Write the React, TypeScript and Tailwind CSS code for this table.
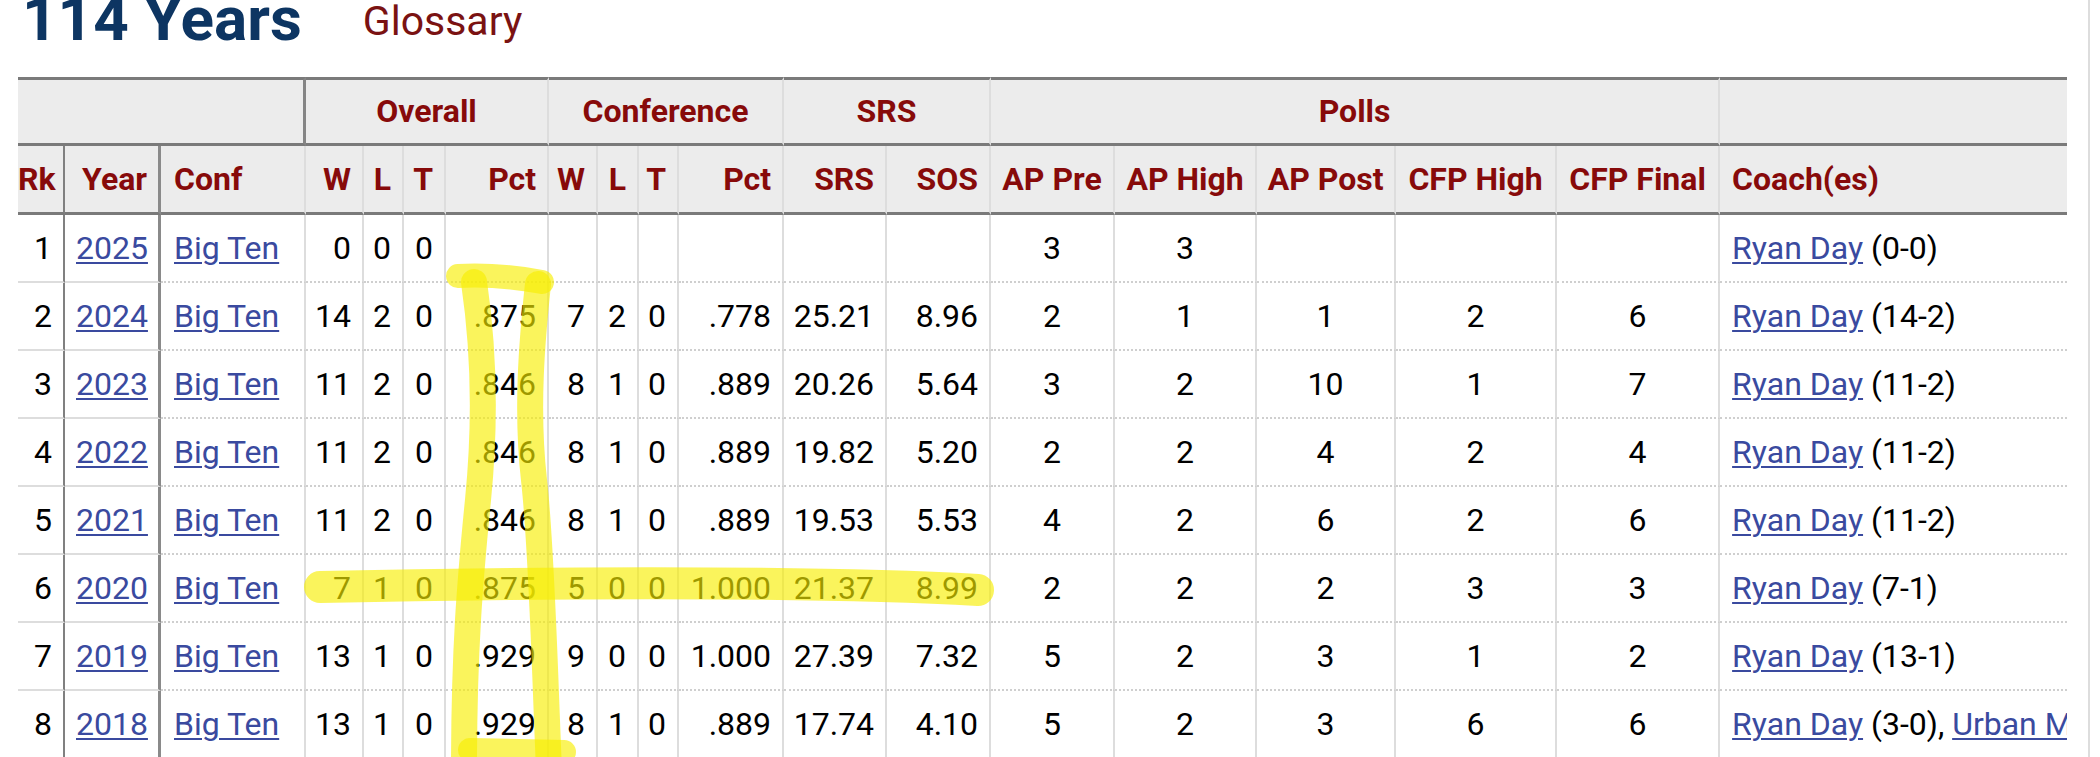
import React from "react";

const NUM = "text-right pl-[4px] pr-[11px] border-r-2 border-r-[#dddddd]";
const POLL = "text-center px-[4px] border-r-2 border-r-[#dddddd]";

const columns = [
  { label: "Rk", w: "w-[47px]", cls: "text-right pl-0 pr-[11px] border-r-2 border-r-[#808080]" },
  { label: "Year", w: "w-[96px]", cls: "text-right px-[11px] border-r-[3px] border-r-[#8a8a8a]" },
  { label: "Conf", w: "w-[145px]", cls: "text-left pl-[13px] pr-[4px] border-r-2 border-r-[#dddddd]" },
  { label: "W", w: "w-[58px]", cls: NUM },
  { label: "L", w: "w-[40px]", cls: NUM },
  { label: "T", w: "w-[42px]", cls: NUM },
  { label: "Pct", w: "w-[103px]", cls: NUM },
  { label: "W", w: "w-[49px]", cls: NUM },
  { label: "L", w: "w-[41px]", cls: NUM },
  { label: "T", w: "w-[40px]", cls: NUM },
  { label: "Pct", w: "w-[105px]", cls: NUM },
  { label: "SRS", w: "w-[103px]", cls: NUM },
  { label: "SOS", w: "w-[104px]", cls: NUM },
  { label: "AP Pre", w: "w-[124px]", cls: POLL },
  { label: "AP High", w: "w-[142px]", cls: POLL },
  { label: "AP Post", w: "w-[139px]", cls: POLL },
  { label: "CFP High", w: "w-[161px]", cls: POLL },
  { label: "CFP Final", w: "w-[163px]", cls: POLL },
  { label: "Coach(es)", w: "w-[347px]", cls: "text-left pl-[12px] pr-0 overflow-hidden whitespace-nowrap" },
];

type Coach = { name: string; rec: string };
type Season = { cells: string[]; coaches: Coach[] };

const seasons: Season[] = [
  { cells: ["1", "2025", "Big Ten", "0", "0", "0", "", "", "", "", "", "", "", "3", "3", "", "", ""], coaches: [{ name: "Ryan Day", rec: "(0-0)" }] },
  { cells: ["2", "2024", "Big Ten", "14", "2", "0", ".875", "7", "2", "0", ".778", "25.21", "8.96", "2", "1", "1", "2", "6"], coaches: [{ name: "Ryan Day", rec: "(14-2)" }] },
  { cells: ["3", "2023", "Big Ten", "11", "2", "0", ".846", "8", "1", "0", ".889", "20.26", "5.64", "3", "2", "10", "1", "7"], coaches: [{ name: "Ryan Day", rec: "(11-2)" }] },
  { cells: ["4", "2022", "Big Ten", "11", "2", "0", ".846", "8", "1", "0", ".889", "19.82", "5.20", "2", "2", "4", "2", "4"], coaches: [{ name: "Ryan Day", rec: "(11-2)" }] },
  { cells: ["5", "2021", "Big Ten", "11", "2", "0", ".846", "8", "1", "0", ".889", "19.53", "5.53", "4", "2", "6", "2", "6"], coaches: [{ name: "Ryan Day", rec: "(11-2)" }] },
  { cells: ["6", "2020", "Big Ten", "7", "1", "0", ".875", "5", "0", "0", "1.000", "21.37", "8.99", "2", "2", "2", "3", "3"], coaches: [{ name: "Ryan Day", rec: "(7-1)" }] },
  { cells: ["7", "2019", "Big Ten", "13", "1", "0", ".929", "9", "0", "0", "1.000", "27.39", "7.32", "5", "2", "3", "1", "2"], coaches: [{ name: "Ryan Day", rec: "(13-1)" }] },
  { cells: ["8", "2018", "Big Ten", "13", "1", "0", ".929", "8", "1", "0", ".889", "17.74", "4.10", "5", "2", "3", "6", "6"], coaches: [{ name: "Ryan Day", rec: "(3-0)" }, { name: "Urban Meyer", rec: "(10-1)" }] },
];

const LINK = "text-[#3a4a9f] underline decoration-2 underline-offset-[3px]";
const H1 = "h-[69px] bg-[#ececec] border-t-[3px] border-t-[#7a7a7a] border-b-[3px] border-b-[#7a7a7a] text-center p-0";

// hand-drawn highlighter marks over the table
function Highlighter() {
  const stroke = { fill: "none", stroke: "#f7ee00", strokeOpacity: 0.64, strokeLinecap: "round" as const, strokeLinejoin: "round" as const };
  return (
    <svg className="absolute inset-0 pointer-events-none z-10" width="2100" height="757" viewBox="0 0 2100 757">
      <path d="M458 276 Q500 274 542 282" strokeWidth="24" {...stroke} />
      <path d="M474 282 C484 350 486 420 478 500 S464 650 464 770" strokeWidth="26" {...stroke} />
      <path d="M538 284 C532 340 526 410 534 480 S545 680 549 770" strokeWidth="26" {...stroke} />
      <path d="M470 750 L564 752" strokeWidth="24" {...stroke} />
      <path d="M320 587 C500 583 800 580 978 590" strokeWidth="32" {...stroke} />
    </svg>
  );
}

export default function App() {
  return (
    <div className="relative w-[2100px] h-[757px] overflow-hidden bg-white font-[family-name:Roboto,sans-serif]">
      <div className="w-[2090px] h-full border-r-2 border-r-[#dddddd]">
        <div className="flex items-start h-[77px] pl-[22px]">
          <h1 className="mt-[-12px] text-[62px] leading-[62px] font-bold text-[#0d3562]">114 Years</h1>
          <span className="ml-[61px] mt-[1px] text-[41px] leading-[41px] text-[#7a1212]">Glossary</span>
        </div>

        <table className="ml-[18px] w-[2049px] table-fixed border-separate border-spacing-0 text-[32px] leading-[1.2]">
          <colgroup>
            {columns.map((c, i) => (
              <col key={i} className={c.w} />
            ))}
          </colgroup>
          <thead className="font-bold text-[#870a0a]">
            <tr>
              <th colSpan={3} className={`${H1} border-r-[3px] border-r-[#858585]`} />
              <th colSpan={4} className={`${H1} border-r-2 border-r-[#dddddd]`}>Overall</th>
              <th colSpan={4} className={`${H1} border-r-2 border-r-[#dddddd]`}>Conference</th>
              <th colSpan={2} className={`${H1} border-r-2 border-r-[#dddddd]`}>SRS</th>
              <th colSpan={5} className={`${H1} border-r-2 border-r-[#dddddd]`}>Polls</th>
              <th className={H1} />
            </tr>
            <tr>
              {columns.map((c, i) => (
                <th key={i} className={`h-[69px] bg-[#ececec] border-b-[3px] border-b-[#7a7a7a] whitespace-nowrap ${c.cls}`}>
                  {c.label}
                </th>
              ))}
            </tr>
          </thead>
          <tbody className="text-black">
            {seasons.map((s) => (
              <tr key={s.cells[1]}>
                {columns.map((c, i) => {
                  const line =
                    i < 2
                      ? "border-b-2 border-b-[#dddddd]"
                      : "border-b-2 border-b-[#cfcfcf] [border-bottom-style:dotted]";
                  let content: React.ReactNode = s.cells[i];
                  if (i === 1 || i === 2) content = <a className={LINK}>{s.cells[i]}</a>;
                  if (i === 18)
                    content = s.coaches.map((co, j) => (
                      <span key={j}>
                        <a className={LINK}>{co.name}</a> {co.rec}
                        {j < s.coaches.length - 1 ? ", " : ""}
                      </span>
                    ));
                  return (
                    <td key={i} className={`h-[68px] bg-white font-normal ${line} ${c.cls}`}>
                      {content}
                    </td>
                  );
                })}
              </tr>
            ))}
          </tbody>
        </table>
      </div>
      <Highlighter />
    </div>
  );
}
